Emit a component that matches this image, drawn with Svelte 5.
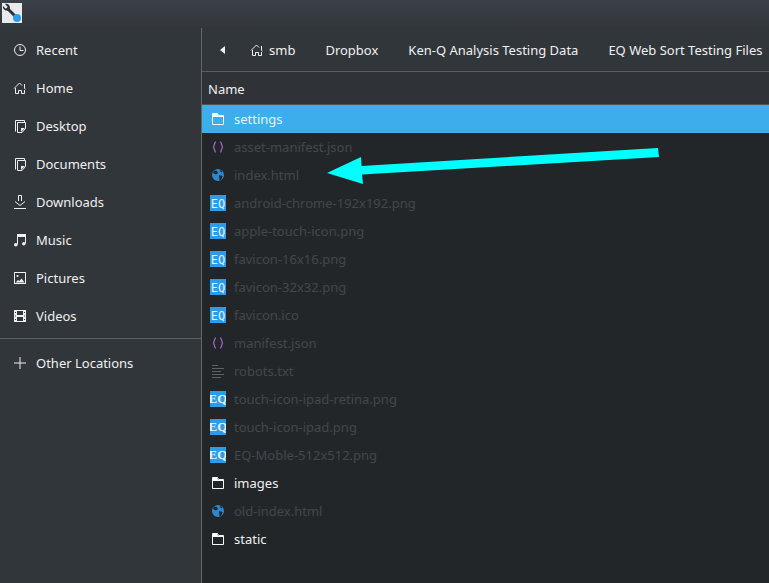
<script>
  const places = [
    { name: 'Recent', icon: 'clock' },
    { name: 'Home', icon: 'home' },
    { name: 'Desktop', icon: 'doc' },
    { name: 'Documents', icon: 'doc' },
    { name: 'Downloads', icon: 'download' },
    { name: 'Music', icon: 'music' },
    { name: 'Pictures', icon: 'picture' },
    { name: 'Videos', icon: 'film' }
  ];
  const crumbs = ['Dropbox', 'Ken-Q Analysis Testing Data', 'EQ Web Sort Testing Files'];
  const files = [
    { name: 'settings', icon: 'folder', selected: true },
    { name: 'asset-manifest.json', icon: 'json' },
    { name: 'index.html', icon: 'globe' },
    { name: 'android-chrome-192x192.png', icon: 'eq1' },
    { name: 'apple-touch-icon.png', icon: 'eq1' },
    { name: 'favicon-16x16.png', icon: 'eq1' },
    { name: 'favicon-32x32.png', icon: 'eq1' },
    { name: 'favicon.ico', icon: 'eq1' },
    { name: 'manifest.json', icon: 'json' },
    { name: 'robots.txt', icon: 'text' },
    { name: 'touch-icon-ipad-retina.png', icon: 'eq2' },
    { name: 'touch-icon-ipad.png', icon: 'eq2' },
    { name: 'EQ-Moble-512x512.png', icon: 'eq2' },
    { name: 'images', icon: 'folder' },
    { name: 'old-index.html', icon: 'globe' },
    { name: 'static', icon: 'folder' }
  ];
</script>

{#snippet glyph(icon)}
  <svg class="icon" width="16" height="16" viewBox="0 0 16 16" aria-hidden="true">
    {#if icon === 'clock'}
      <circle cx="8" cy="8" r="5.500" fill="none" stroke="#eff0f1" />
      <path d="M8 4.500V8.500H11.500" fill="none" stroke="#eff0f1" />
    {:else if icon === 'home'}
      <path d="M2 8.500L7.500 3 10 5.500M12.500 4v4.500l1 .5M3.500 8v5.500h3v-3h3v3h3V10" fill="none" stroke="#eff0f1" />
    {:else if icon === 'doc'}
      <path d="M3.500 13.500v-11h9v2" fill="none" stroke="#eff0f1" />
      <path d="M5.500 4.500h8v6l-3.500 4H5.500z" fill="#31363b" stroke="#eff0f1" />
      <path d="M9 14v-4h4z" fill="#eff0f1" />
    {:else if icon === 'download'}
      <path d="M6.500 7V1.500h3V7M3 7.500L8 11.500 13 7.500M2 14.500h12" fill="none" stroke="#eff0f1" />
    {:else if icon === 'music'}
      <path d="M5.500 12.500V3.500M13.500 11.500V3.500" fill="none" stroke="#eff0f1" />
      <path d="M5 2h9v3H5z" fill="#eff0f1" />
      <circle cx="3.800" cy="12.800" r="1.800" fill="#eff0f1" />
      <circle cx="11.800" cy="11.800" r="1.800" fill="#eff0f1" />
    {:else if icon === 'picture'}
      <rect x="2.500" y="2.500" width="11" height="11" fill="none" stroke="#eff0f1" />
      <circle cx="5.500" cy="6" r="1.100" fill="#eff0f1" />
      <path d="M3.500 12.500l2.500-2.500 1.500 1 2-2.500 3 4z" fill="#eff0f1" />
    {:else if icon === 'film'}
      <path fill-rule="evenodd" d="M2 2h12v12H2zM5 3v4h6V3zM5 9v4h6V9zM3 4v1h1V4zM3 7.500v1h1v-1zM3 11v1h1v-1zM12 4v1h1V4zM12 7.500v1h1v-1zM12 11v1h1v-1z" fill="#eff0f1" />
    {:else if icon === 'plus'}
      <path d="M8 2v12M2 8h12" fill="none" stroke="#eff0f1" />
    {:else if icon === 'folder'}
      <path d="M2.500 13.500V2.500h5l1 2h5v9z" fill="none" stroke="#fcfcfc" />
      <path d="M3 3h4.200l1 2H13v1H3z" fill="#fcfcfc" />
    {:else if icon === 'json'}
      <path d="M5.500 2.500L3.500 8l2 5.500M10.500 2.500L12.500 8l-2 5.500" fill="none" stroke="#ad62ca" stroke-width="1.200" />
    {:else if icon === 'globe'}
      <circle cx="8" cy="8" r="6" fill="#2a88d0" />
      <path d="M4 3.500l3 .5 1 2-2 1.500L3 6zM9 8l3.500 1-1 3.500-2 1zM9.500 2.500l3 2-1.500 1z" fill="#232629" />
    {:else if icon === 'text'}
      <path d="M2 2.500h6M2 5.500h12M2 8.500h9M2 11.500h12M2 14.500h9" fill="none" stroke="#5a6268" />
    {:else}
      <rect x="0" y="0" width="16" height="16" fill="#2c9cea" />
      {#if icon === 'eq1'}
        <text x="8" y="13" text-anchor="middle" class="eq-a">EQ</text>
      {:else}
        <text x="8" y="12" text-anchor="middle" class="eq-b">EQ</text>
      {/if}
    {/if}
  </svg>
{/snippet}

<div class="window">
  <header class="titlebar">
    <div class="app-icon">
      <svg width="20" height="20" viewBox="0 0 20 20" aria-hidden="true">
        <path d="M5.500 5.500L14 14" stroke="#2b3137" stroke-width="3" fill="none" />
        <path d="M1 3L3.500 5.500 5 5 5.500 3.500 3 1C5 0 8 1.500 8 5L7 8 4.500 7.500C2 7.500 .500 5 1 3z" fill="#2b3137" />
        <circle cx="15" cy="15" r="4" fill="#2d9cf0" />
      </svg>
    </div>
  </header>

  <div class="body">
    <aside class="sidebar">
      <ul class="places">
        {#each places as place}
          <li>{@render glyph(place.icon)}<span>{place.name}</span></li>
        {/each}
      </ul>
      <div class="other">{@render glyph('plus')}<span>Other Locations</span></div>
    </aside>

    <main class="pane">
      <nav class="pathbar">
        <span class="back"></span>
        <span class="crumb home">{@render glyph('home')}<span>smb</span></span>
        {#each crumbs as crumb}
          <span class="crumb">{crumb}</span>
        {/each}
      </nav>
      <div class="colhead">Name</div>
      <ul class="files">
        {#each files as file}
          <li class:selected={file.selected} class:dir={file.icon === 'folder'}>
            {@render glyph(file.icon)}<span>{file.name}</span>
          </li>
        {/each}
      </ul>
      <svg class="arrow" width="769" height="583" viewBox="0 0 769 583" aria-hidden="true">
        <path d="M327 173L361 157 361.500 166 658 148 659 157 362 174.500 363 184z" fill="#00ffff" />
      </svg>
    </main>
  </div>
</div>

<style>
  :global(body) { margin: 0; }

  .window {
    width: 769px;
    height: 583px;
    overflow: hidden;
    display: flex;
    flex-direction: column;
    background: #31363b;
    color: #eff0f1;
    font-family: "Noto Sans", sans-serif;
    font-size: 13px;
  }

  .titlebar {
    height: 28px;
    flex: none;
    padding: 3px 0 0 2px;
    box-sizing: border-box;
    background: linear-gradient(#3c4049, #31363b);
  }
  .app-icon { width: 20px; height: 20px; background: #e8eaec; }
  .app-icon svg { display: block; }

  .body { flex: 1; display: flex; min-height: 0; }

  .sidebar { width: 201px; flex: none; padding-top: 3px; }
  .places { list-style: none; margin: 0; padding: 0; }
  .places li, .other {
    height: 38px;
    display: flex;
    align-items: center;
    gap: 8px;
    padding-left: 12px;
  }
  .other {
    border-top: 1px solid #5a5f64;
    margin-top: 3px;
    height: 47px;
  }
  .icon { flex: none; display: block; }

  .pane {
    flex: 1;
    min-width: 0;
    position: relative;
    border-left: 1px solid #62676c;
    display: flex;
    flex-direction: column;
  }

  .pathbar {
    height: 44px;
    flex: none;
    box-sizing: border-box;
    display: flex;
    align-items: center;
    padding-left: 18px;
    border-bottom: 1px solid #5a5f64;
    white-space: nowrap;
  }
  .back {
    width: 0;
    height: 0;
    border-top: 4px solid transparent;
    border-bottom: 4px solid transparent;
    border-right: 5px solid #eff0f1;
    margin-right: 24px;
  }
  .crumb { margin-right: 30px; }
  .crumb.home { display: flex; align-items: center; gap: 4px; }

  .colhead {
    height: 33px;
    flex: none;
    box-sizing: border-box;
    display: flex;
    align-items: center;
    padding: 1px 0 0 6px;
    background: #2f3338;
    border-bottom: 1px solid #4d5257;
  }

  .files {
    list-style: none;
    margin: 0;
    padding: 0;
    flex: 1;
    background: #232629;
  }
  .files li {
    height: 28px;
    display: flex;
    align-items: center;
    gap: 8px;
    padding-left: 8px;
    color: #43474b;
  }
  .files li.dir { color: #eff0f1; }
  .files li.selected { background: #3daee9; color: #eff0f1; }

  .eq-a {
    font-family: "DejaVu Sans Mono", monospace;
    font-size: 12px;
    fill: #e6f3fd;
  }
  .eq-b {
    font-family: "Liberation Serif", serif;
    font-size: 13px;
    font-weight: 700;
    fill: #e6f3fd;
  }

  .arrow {
    position: absolute;
    top: -28px;
    left: -202px;
    pointer-events: none;
  }
</style>
